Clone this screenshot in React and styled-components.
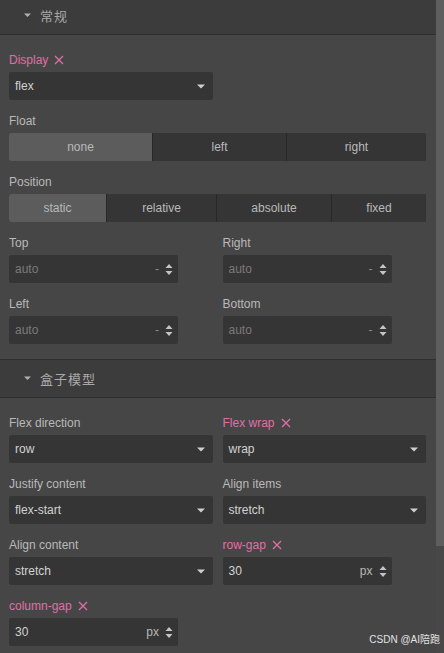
import React from 'react'
import styled, { createGlobalStyle } from 'styled-components'

const GlobalStyle = createGlobalStyle`
  html, body {
    margin: 0;
    padding: 0;
    background: #464646;
    overflow: hidden;
  }
  body {
    font-family: "Liberation Sans", Arial, "Noto Sans CJK SC", sans-serif;
  }
`

function Caret({ color = '#cfcfcf', size = 8 }) {
  return (
    <svg width={size} height={size / 2 + 1} viewBox="0 0 8 5">
      <path d="M0 0.5 L8 0.5 L4 4.5 Z" fill={color} />
    </svg>
  )
}

function Cross() {
  return (
    <svg width="10" height="10" viewBox="0 0 10 10">
      <path d="M1 1 L9 9 M9 1 L1 9" stroke="#e06fa6" strokeWidth="1.3" />
    </svg>
  )
}

function Spinner() {
  return (
    <svg width="8" height="13" viewBox="0 0 8 13">
      <path d="M0.5 5 L4 1 L7.5 5 Z" fill="#c4c4c4" />
      <path d="M0.5 8 L4 12 L7.5 8 Z" fill="#c4c4c4" />
    </svg>
  )
}

function Select({ value }) {
  return (
    <SelectBox>
      <span>{value}</span>
      <Caret />
    </SelectBox>
  )
}

function NumberInput({ value, unit }) {
  return (
    <InputBox>
      <InputValue $empty={!value}>{value || 'auto'}</InputValue>
      <Unit $dash={!unit}>{unit || '-'}</Unit>
      <Spinner />
    </InputBox>
  )
}

function Field({ label, active, children }) {
  return (
    <FieldWrap>
      <Label $active={active}>
        {label}
        {active && <Cross />}
      </Label>
      {children}
    </FieldWrap>
  )
}

function Segmented({ items, active, widths }) {
  return (
    <SegGroup $cols={widths}>
      {items.map((it) => (
        <SegButton key={it} $active={it === active}>{it}</SegButton>
      ))}
    </SegGroup>
  )
}

function SectionHeader({ title, first }) {
  return (
    <Header $first={first}>
      <Caret color="#b0b0b0" size={7} />
      <HeaderTitle>{title}</HeaderTitle>
    </Header>
  )
}

export default function App() {
  return (
    <>
      <GlobalStyle />
      <Page>
        <Panel>
          <SectionHeader title="常规" first />
          <Body>
            <Field label="Display" active>
              <Half><Select value="flex" /></Half>
            </Field>
            <Field label="Float">
              <Segmented items={['none', 'left', 'right']} active="none" widths="143fr 134fr 140fr" />
            </Field>
            <Field label="Position">
              <Segmented items={['static', 'relative', 'absolute', 'fixed']} active="static" widths="97fr 110fr 115fr 95fr" />
            </Field>
            <Grid>
              <Field label="Top"><NumberInput /></Field>
              <Field label="Right"><NumberInput /></Field>
              <Field label="Left"><NumberInput /></Field>
              <Field label="Bottom"><NumberInput /></Field>
            </Grid>
          </Body>
          <SectionHeader title="盒子模型" />
          <Body>
            <Grid>
              <Field label="Flex direction"><Select value="row" /></Field>
              <Field label="Flex wrap" active><Select value="wrap" /></Field>
              <Field label="Justify content"><Select value="flex-start" /></Field>
              <Field label="Align items"><Select value="stretch" /></Field>
              <Field label="Align content"><Select value="stretch" /></Field>
              <Field label="row-gap" active><NumberInput value="30" unit="px" /></Field>
              <Field label="column-gap" active><NumberInput value="30" unit="px" /></Field>
            </Grid>
          </Body>
        </Panel>
        <ScrollTrack>
          <Thumb />
        </ScrollTrack>
        <Watermark>CSDN @AI陪跑</Watermark>
      </Page>
    </>
  )
}

const Page = styled.div`
  position: relative;
  display: flex;
  align-items: flex-start;
  width: 444px;
  height: 653px;
  overflow: hidden;
  background: #464646;
`

const Panel = styled.div`
  flex: 1;
  display: flex;
  flex-direction: column;
  margin-top: -3px;
  & > * {
    flex-shrink: 0;
  }
`

const Header = styled.header`
  height: 37px;
  display: flex;
  align-items: center;
  gap: 9px;
  padding-left: 24px;
  background: #3c3c3c;
  border-top: ${(p) => (p.$first ? 'none' : '1px solid #2f2f2f')};
  border-bottom: 1px solid #2f2f2f;
`

const HeaderTitle = styled.span`
  font-size: 13px;
  color: #a9a9a9;
  font-family: "Noto Sans CJK SC", sans-serif;
  letter-spacing: 1px;
`

const Body = styled.div`
  display: flex;
  flex-direction: column;
  gap: 14px;
  padding: 18px 10px 15px 9px;
`

const Grid = styled.div`
  display: grid;
  grid-template-columns: 1fr 1fr;
  column-gap: 10px;
  row-gap: 14px;
`

const FieldWrap = styled.div`
  display: flex;
  flex-direction: column;
  gap: 5px;
  min-width: 0;
`

const Label = styled.div`
  display: flex;
  align-items: center;
  gap: 6px;
  height: 14px;
  font-size: 12px;
  color: ${(p) => (p.$active ? '#e06fa6' : '#b9b9b9')};
`

const Half = styled.div`
  width: 204px;
`

const SelectBox = styled.div`
  height: 28px;
  display: flex;
  align-items: center;
  justify-content: space-between;
  padding: 0 8px 0 6px;
  background: #353535;
  border-radius: 2px;
  font-size: 12px;
  color: #d2d2d2;
`

const InputBox = styled.div`
  width: 169px;
  height: 28px;
  display: flex;
  align-items: center;
  padding: 0 5px 0 6px;
  box-sizing: border-box;
  background: #353535;
  border-radius: 2px;
  font-size: 12px;
`

const InputValue = styled.span`
  flex: 1;
  color: ${(p) => (p.$empty ? '#7a7a7a' : '#d2d2d2')};
`

const Unit = styled.span`
  margin-right: 6px;
  color: ${(p) => (p.$dash ? '#8a8a8a' : '#b8b8b8')};
`

const SegGroup = styled.div`
  display: grid;
  grid-template-columns: ${(p) => p.$cols};
  height: 28px;
  background: #353535;
  border-radius: 2px;
  overflow: hidden;
`

const SegButton = styled.div`
  display: flex;
  align-items: center;
  justify-content: center;
  font-size: 12px;
  color: #b9b9b9;
  background: ${(p) => (p.$active ? '#5c5c5c' : '#353535')};
  & + & {
    border-left: 1px solid #282828;
  }
`

const ScrollTrack = styled.div`
  width: 8px;
  height: 653px;
  display: flex;
  flex-direction: column;
  background: #484848;
`

const Thumb = styled.div`
  height: 546px;
  background: #5e5e5e;
`

const Watermark = styled.div`
  position: absolute;
  right: 4px;
  bottom: 7px;
  font-size: 10px;
  color: #e2e2e2;
  font-family: "Liberation Sans", "Noto Sans CJK SC", sans-serif;
`
